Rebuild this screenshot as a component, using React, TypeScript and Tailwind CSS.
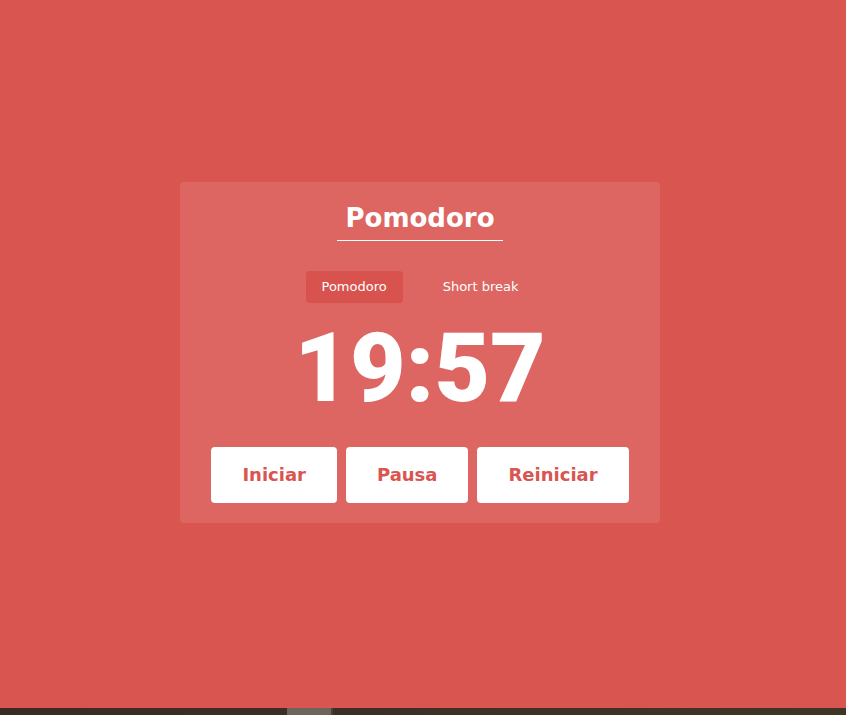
import React from "react";

const buttons = ["Iniciar", "Pausa", "Reiniciar"];

export default function App() {
  return (
    <div className="w-full min-h-screen bg-[#D95550] flex flex-col">
      {/* Main area */}
      <div className="h-[708px] flex items-center justify-center pr-[6px] pb-[3px]">
        <div className="w-[480px] rounded-[4px] bg-white/10 pt-[21px] pb-5 flex flex-col items-center">
          <h1 className="px-2 pb-[6px] border-b border-white text-white text-[26px] leading-[31px] font-bold font-['DejaVu_Sans',sans-serif]">
            Pomodoro
          </h1>

          <div className="mt-[30px] flex items-center gap-6 font-['DejaVu_Sans',sans-serif]">
            <button className="h-8 px-4 rounded-[4px] bg-[#D8524E] text-white text-[13px]">
              Pomodoro
            </button>
            <button className="h-8 px-4 rounded-[4px] text-white text-[13px]">
              Short break
            </button>
          </div>

          <div className="mt-[17px] h-24 text-white text-[96px] leading-none font-black font-['Roboto',sans-serif]">
            19:57
          </div>

          <div className="mt-[31px] flex items-center gap-[9px]">
            {buttons.map((label) => (
              <button
                key={label}
                className="bg-white rounded-[4px] px-[31px] py-4 text-[18px] leading-6 font-bold text-[#D95550] font-['DejaVu_Sans',sans-serif]"
              >
                {label}
              </button>
            ))}
          </div>
        </div>
      </div>

      {/* Bottom strip */}
      <div className="h-[7px] flex bg-gradient-to-r from-[#3a2a24] to-[#3f3526]">
        <div className="w-[287px]" />
        <div className="w-[44px] bg-[#6d655b]" />
        <div className="w-[2px] bg-[#4a4138]" />
      </div>
    </div>
  );
}
